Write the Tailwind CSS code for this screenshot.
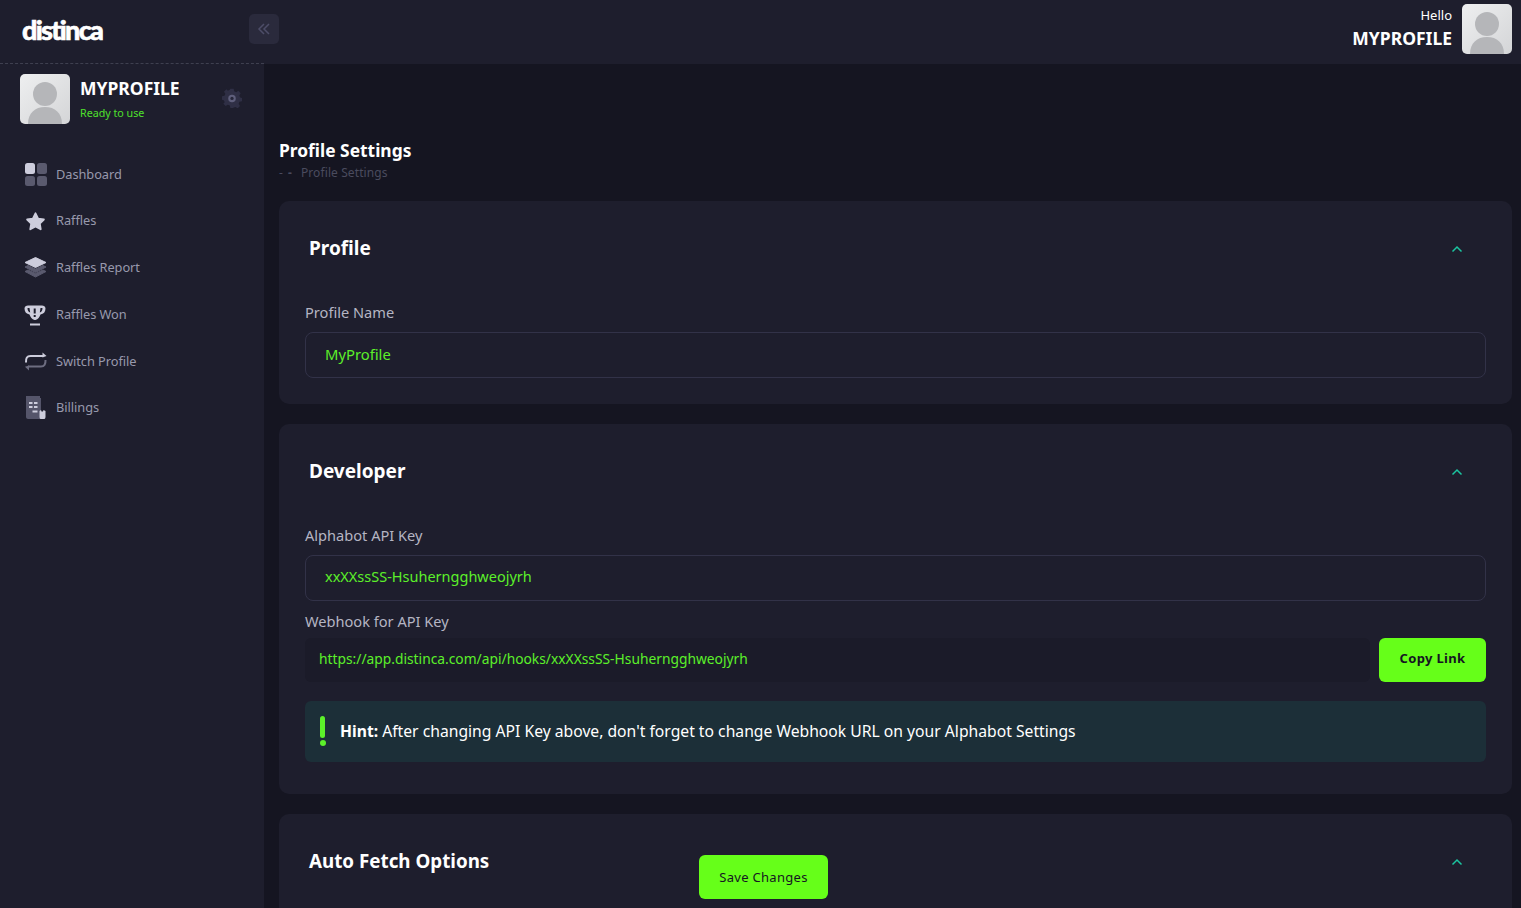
<!DOCTYPE html>
<html lang="en">
<head>
    <meta charset="UTF-8">
    <meta name="viewport" content="width=device-width, initial-scale=1.0">
    <title>Profile Settings</title>
    <script src="https://cdn.jsdelivr.net/npm/@tailwindcss/browser@4"></script>
</head>
<body class="h-screen overflow-hidden bg-[#151521] font-['Noto_Sans','Open_Sans',sans-serif] relative">
    <div class="flex h-full">
        <!-- sidebar -->
        <aside class="w-[264px] shrink-0 bg-[#1e1e2d] flex flex-col">
            <div class="h-[64px] border-b border-dashed border-[#3f4050] flex items-center pl-[22px] relative">
                <span class="font-['Lato',sans-serif] text-[27px] font-black text-white tracking-[-1.7px] leading-none -mt-[5px] [-webkit-text-stroke:0.6px_white]">distinca</span>
                <button class="absolute left-[249px] top-[14px] w-[30px] h-[30px] rounded-[5px] bg-[#2a2a3c] flex items-center justify-center">
                    <svg class="w-[14px] h-[14px]" viewBox="0 0 14 14" fill="none" stroke="#4d4d68" stroke-width="1.5"><path d="M7 2 2 7l5 5M12 2 7 7l5 5"/></svg>
                </button>
            </div>
            <div class="flex items-center pl-[20px] pt-[10px] relative">
                <svg class="w-[50px] h-[50px] rounded-[5px] shrink-0" viewBox="0 0 50 50"><defs><linearGradient id="a1" x1="0" y1="0" x2="1" y2="1"><stop offset="0" stop-color="#eeeff0"/><stop offset="1" stop-color="#d4d5d7"/></linearGradient></defs><rect width="50" height="50" fill="url(#a1)"/><circle cx="25" cy="20" r="12" fill="#b5b6b9"/><path d="M8 50c0-11 7-17 17-17s17 6 17 17z" fill="#b5b6b9"/></svg>
                <div class="ml-[10px] -mt-[1px]">
                    <div class="text-[17.5px] leading-[24px] font-bold text-white">MYPROFILE</div>
                    <div class="text-[10.7px] leading-[16px] mt-[5px] text-[#4fe02c]">Ready to use</div>
                </div>
                <svg class="absolute left-[222px] top-[24px] w-[20px] h-[20px]" viewBox="0 0 24 24"><path fill="#2f2f45" d="M10 1h4l.6 3 2.400 1 2.600-1.600 2.800 2.800L20.800 9l1 2.400 2.200.6v4l-3 .6-1 2.400 1.600 2.600-2.800 2.800-2.800-1.600-2.400 1L13 24h-3l-.6-3-2.400-1-2.600 1.600-2.800-2.800L3.200 17l-1-2.400L0 14v-4l3-.6 1-2.400-1.600-2.600 2.800-2.800L7 3.200 9.400 2.200z"/><circle cx="12" cy="12.500" r="4.500" fill="#5f5f7c"/><circle cx="12" cy="12.500" r="2" fill="#26263a"/></svg>
            </div>
            <nav class="mt-[27px] pl-[24px] flex flex-col text-[12.8px] tracking-[-0.05px] text-[#9899ac]">
                <a class="h-[46.700px] flex items-center gap-[9px]">
                    <svg class="w-[23px] h-[23px]" viewBox="0 0 23 23"><rect x="1" y="0" width="10" height="11" rx="2.500" fill="#cdcddc"/><rect x="13" y="0" width="10" height="11" rx="2.500" fill="#5a5a6e"/><rect x="1" y="13" width="10" height="10" rx="2.500" fill="#5a5a6e"/><rect x="13" y="13" width="10" height="10" rx="2.500" fill="#5a5a6e"/></svg>
                    Dashboard
                </a>
                <a class="h-[46.700px] flex items-center gap-[9px]">
                    <svg class="w-[23px] h-[23px]" viewBox="0 0 24 24"><path fill="#cdcddc" stroke="#cdcddc" stroke-width="2" stroke-linejoin="round" d="M12 3.500l2.700 5.500 6 .9-4.300 4.200 1 6-5.400-2.900-5.400 2.900 1-6-4.300-4.200 6-.9z"/></svg>
                    Raffles
                </a>
                <a class="h-[46.700px] flex items-center gap-[9px]">
                    <svg class="w-[23px] h-[23px]" viewBox="0 0 23 23"><path fill="#5a5a6e" stroke="#5a5a6e" stroke-linejoin="round" d="M1 15.500l3-1.500 7.500 3.500L19 14l3 1.500-10.500 5.500z"/><path fill="#5a5a6e" stroke="#5a5a6e" stroke-linejoin="round" d="M1 11l3-1.500 7.500 3.500L19 9.500l3 1.500-10.500 5.500z"/><path fill="#cdcddc" stroke="#cdcddc" stroke-linejoin="round" d="M11.500 1.500 22 6.500l-10.500 5L1 6.500z"/></svg>
                    Raffles Report
                </a>
                <a class="h-[46.700px] flex items-center gap-[9px]">
                    <svg class="w-[23px] h-[23px]" viewBox="0 0 23 23"><path fill="#cdcddc" d="M4 2.500h14c1.800 0 3.500 1 3.500 3 0 3.500-2 5.500-5 6-.8 2.500-2.500 5-5 5.500h-1c-2.500-.5-4.200-3-5-5.500-3-.5-5-2.500-5-6 0-2 1.700-3 3.500-3z"/><path fill="#1e1e2d" d="M3.500 5H5.500L6.200 9.500C4.500 9 3.500 7.500 3.500 5zM16.500 5h2c0 2.500-1 4-2.700 4.500zM9.700 5.500h2v5h-2zM9.700 12h2v2h-2z"/><rect x="6" y="20.500" width="10" height="2" fill="#cdcddc"/></svg>
                    Raffles Won
                </a>
                <a class="h-[46.700px] flex items-center gap-[9px]">
                    <svg class="w-[23px] h-[23px]" viewBox="0 0 23 23" fill="none"><path stroke="#6d6d80" stroke-width="2" d="M21.500 10c.2 4-1 6.500-4.500 6.500H4"/><path stroke="#cdcddc" stroke-width="2" d="M2 12.500C1.800 8 3 6 6.500 6H19"/><path fill="#cdcddc" d="M18.500 2.500 22.500 6 18.500 7.500z"/><path fill="#6d6d80" d="M5 20.500 1 16.800 5 15.500z"/></svg>
                    Switch Profile
                </a>
                <a class="h-[46.700px] flex items-center gap-[9px]">
                    <svg class="w-[23px] h-[23px]" viewBox="0 0 23 23"><path fill="#55556a" d="M2 0h14v2h1v21H4c-1 0-2-1-2-2z"/><path fill="#cdcddc" d="M5 6h3.500v2H5zM10 6h3.500v2H10zM5 10h3.500v2H5zM10 10h3.500v2H10zM8.500 14.500h5v2h-5z"/><path fill="#cdcddc" d="M15.500 15l1.500-1 .5 1.500h1.500l.5-1.500 2 1v6c0 1.500-1 2.500-3 2.500s-3-1-3-2.500z"/></svg>
                    Billings
                </a>
            </nav>
        </aside>

        <div class="flex-1 min-w-0 flex flex-col">
            <!-- header -->
            <header class="h-[64px] shrink-0 bg-[#1e1e2d] flex items-start justify-end pr-[9px] pt-[4px]">
                <div class="text-right mr-[10px]">
                    <div class="text-[13px] leading-[22px] text-white">Hello</div>
                    <div class="text-[17.5px] leading-[25px] font-bold text-white">MYPROFILE</div>
                </div>
                <svg class="w-[50px] h-[50px] rounded-[5px]" viewBox="0 0 50 50"><defs><linearGradient id="a2" x1="0" y1="0" x2="1" y2="1"><stop offset="0" stop-color="#eeeff0"/><stop offset="1" stop-color="#d4d5d7"/></linearGradient></defs><rect width="50" height="50" fill="url(#a2)"/><circle cx="25" cy="20" r="12" fill="#b5b6b9"/><path d="M8 50c0-11 7-17 17-17s17 6 17 17z" fill="#b5b6b9"/></svg>
            </header>

            <!-- page -->
            <main class="pl-[15px] pr-[9px] pt-[74px] flex flex-col">
                <h1 class="text-[17.4px] leading-[24px] font-bold text-white">Profile Settings</h1>
                <div class="flex items-center text-[12px] leading-[18px] tracking-[0.1px] text-[#4a4b5e] mt-[2px]">
                    <span>-</span><span class="ml-[5px] font-bold">-</span><span class="ml-[9px]">Profile Settings</span>
                </div>

                <section class="mt-[19px] h-[203px] rounded-[10px] bg-[#1e1e2d] px-[26px]">
                    <div class="h-[93px] flex items-center justify-between pl-[4px] pr-[23px]">
                        <h2 class="text-[19px] font-bold text-white pt-[2px]">Profile</h2>
                        <svg class="w-[12px] h-[12px] mt-[2px]" viewBox="0 0 12 12" fill="none" stroke="#1bc5a0" stroke-width="1.500"><path d="M1.500 8.500 6 4l4.500 4.500"/></svg>
                    </div>
                    <label class="block text-[14.6px] leading-[20px] text-[#b5b5c3] mt-[8px]">Profile Name</label>
                    <div class="mt-[10px] h-[46px] rounded-[8px] border border-[#323248] flex items-center pl-[19px] pb-[2px] text-[14.8px] text-[#5cf02a]">MyProfile</div>
                </section>

                <section class="mt-[20px] h-[370px] rounded-[10px] bg-[#1e1e2d] px-[26px]">
                    <div class="h-[93px] flex items-center justify-between pl-[4px] pr-[23px]">
                        <h2 class="text-[19px] font-bold text-white pt-[2px]">Developer</h2>
                        <svg class="w-[12px] h-[12px] mt-[2px]" viewBox="0 0 12 12" fill="none" stroke="#1bc5a0" stroke-width="1.500"><path d="M1.500 8.500 6 4l4.500 4.500"/></svg>
                    </div>
                    <label class="block text-[14.6px] leading-[20px] text-[#b5b5c3] mt-[8px]">Alphabot API Key</label>
                    <div class="mt-[10px] h-[46px] rounded-[8px] border border-[#323248] flex items-center pl-[19px] pb-[2px] text-[14.5px] text-[#5cf02a]">xxXXssSS-Hsuherngghweojyrh</div>
                    <label class="block text-[14.6px] leading-[20px] text-[#b5b5c3] mt-[10px]">Webhook for API Key</label>
                    <div class="mt-[7px] flex gap-[9px]">
                        <div class="flex-1 h-[44px] rounded-[6px] bg-[#1b1b29] flex items-center pl-[14px] pb-[2px] text-[13.800px] text-[#5cf02a]">https://app.distinca.com/api/hooks/xxXXssSS-Hsuherngghweojyrh</div>
                        <button class="w-[107px] h-[44px] pb-[2px] rounded-[6px] bg-[#66ff19] text-[13px] font-bold tracking-[0.35px] text-[#151521]">Copy Link</button>
                    </div>
                    <div class="mt-[19px] h-[61px] rounded-[6px] bg-[#1c2f38] flex items-center pl-[35px] relative">
                        <span class="absolute left-[15px] top-[15px] w-[5px] h-[22px] rounded-full bg-[#5cf02a]"></span>
                        <span class="absolute left-[15px] top-[39px] w-[6px] h-[6px] rounded-full bg-[#5cf02a]"></span>
                        <p class="text-[15.700px] text-white"><b>Hint:</b> After changing API Key above, don't forget to change Webhook URL on your Alphabot Settings</p>
                    </div>
                </section>

                <section class="mt-[20px] h-[200px] rounded-[10px] bg-[#1e1e2d] px-[26px]">
                    <div class="h-[93px] flex items-center justify-between pl-[4px] pr-[23px]">
                        <h2 class="text-[18.800px] font-bold text-white pt-[2px]">Auto Fetch Options</h2>
                        <svg class="w-[12px] h-[12px] mt-[2px]" viewBox="0 0 12 12" fill="none" stroke="#1bc5a0" stroke-width="1.500"><path d="M1.500 8.500 6 4l4.500 4.500"/></svg>
                    </div>
                </section>
            </main>
        </div>
    </div>

    <!-- floating save button -->
    <button class="fixed left-[699px] top-[855px] w-[129px] h-[44px] pt-[2px] rounded-[6px] bg-[#66ff19] text-[13px] tracking-[0.3px] text-[#151521]">Save Changes</button>
</body>
</html>
